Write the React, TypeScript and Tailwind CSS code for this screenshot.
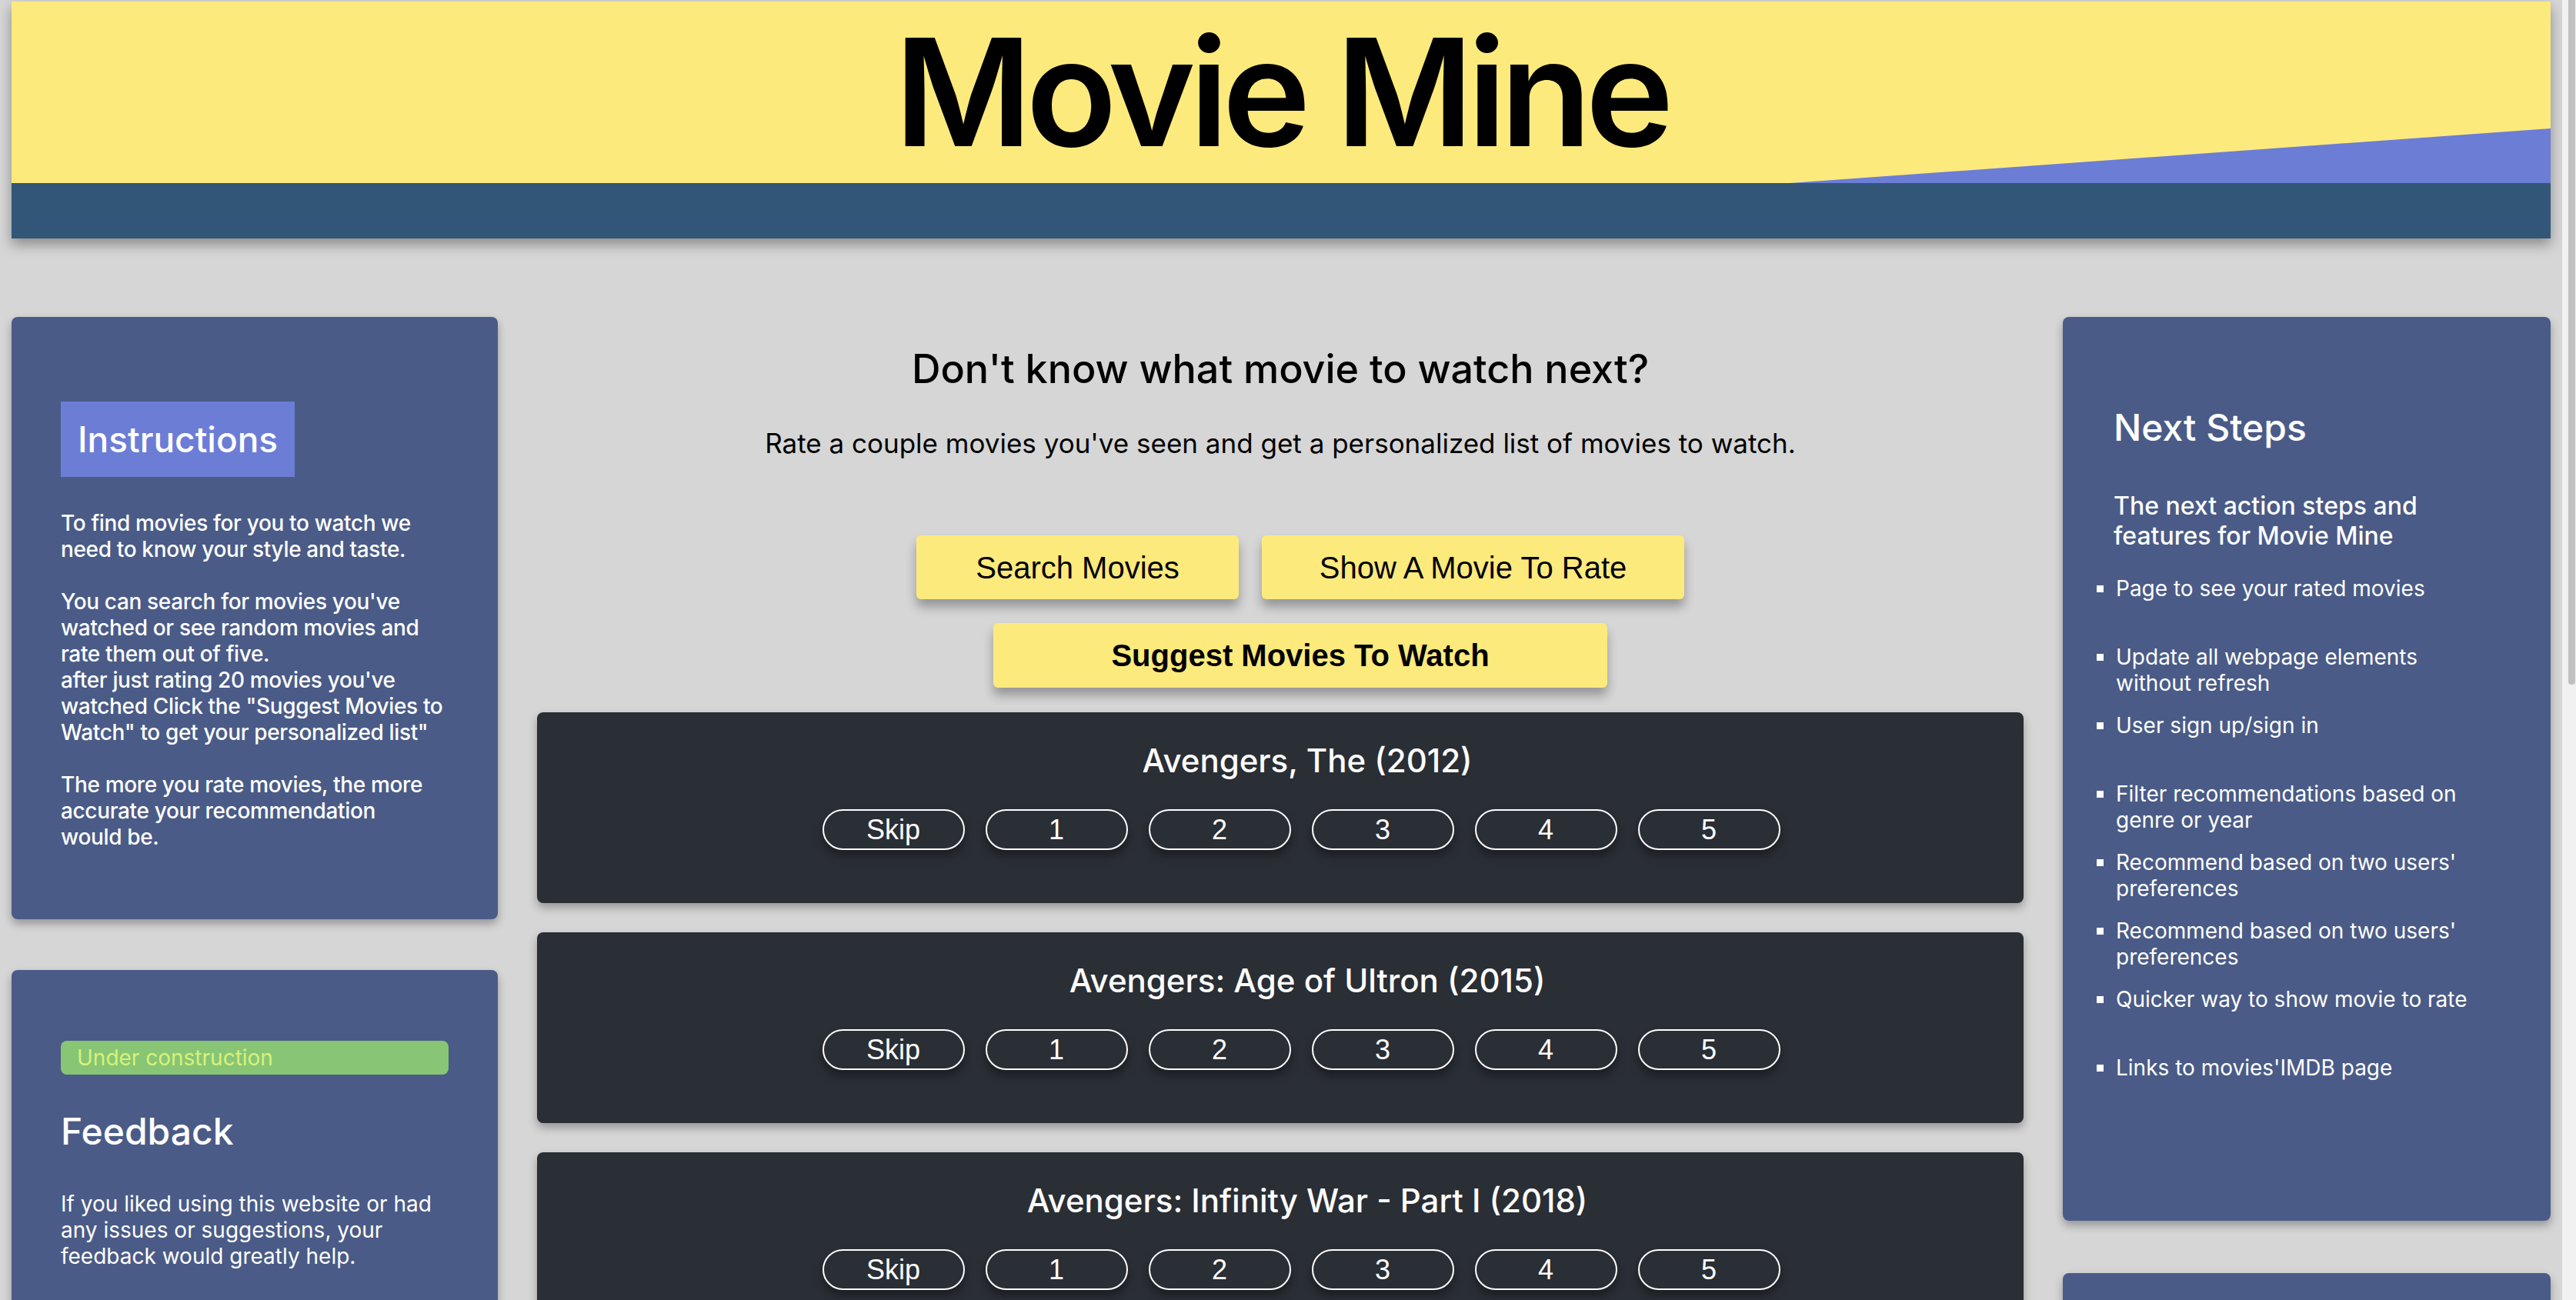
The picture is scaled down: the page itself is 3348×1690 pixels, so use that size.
import React from 'react';

const sans = { fontFamily: 'Inter, "Noto Sans", sans-serif' };
const arial = { fontFamily: '"Liberation Sans", Arial, sans-serif' };

const movies = [
  'Avengers, The (2012)',
  'Avengers: Age of Ultron (2015)',
  'Avengers: Infinity War - Part I (2018)',
];

const nextSteps = [
  'Page to see your rated movies',
  'Update all webpage elements without refresh',
  'User sign up/sign in',
  'Filter recommendations based on genre or year',
  "Recommend based on two users' preferences",
  "Recommend based on two users' preferences",
  'Quicker way to show movie to rate',
  "Links to movies'IMDB page",
];

function MovieCard({ title }: { title: string }) {
  return (
    <div className="h-[248px] shrink-0 rounded-lg bg-[#2a2e35] pl-[54px] pt-[38px] shadow-[0_6px_12px_rgba(0,0,0,0.3)]">
      <h3 className="pl-[16px] text-center text-[42px] leading-[50px] font-medium text-white" style={sans}>
        {title}
      </h3>
      <div className="mt-[38px] flex justify-center gap-[27px]">
        {['Skip', '1', '2', '3', '4', '5'].map((label) => (
          <button
            key={label}
            className="h-[53px] w-[185px] rounded-[27px] border-2 border-white bg-transparent text-[36px] leading-none text-white shadow-[0_8px_12px_rgba(0,0,0,0.35)]"
            style={arial}
          >
            {label}
          </button>
        ))}
      </div>
    </div>
  );
}

export default function App() {
  return (
    <div className="flex h-screen overflow-hidden bg-[#d6d6d6]" style={sans}>
      <div className="min-w-0 flex-1 px-[15px] pt-[2px]">
        {/* Header */}
        <header className="shadow-[0_8px_16px_rgba(0,0,0,0.35)]">
          <div className="relative flex h-[236px] items-center justify-center overflow-hidden bg-[#fdea7c]">
            <svg
              className="absolute bottom-0 right-0"
              width="989"
              height="71"
              viewBox="0 0 989 71"
              preserveAspectRatio="none"
            >
              <polygon points="0,71 989,0 989,71" fill="#6c7dd5" />
            </svg>
            <h1 className="relative text-[194px] leading-none font-semibold tracking-[-8px] text-black">Movie Mine</h1>
          </div>
          <div className="h-[72px] bg-[#325678]" />
        </header>

        <main className="mt-[102px] grid grid-cols-[632px_1fr_634px] gap-x-[51px]">
          {/* Left column */}
          <div className="flex flex-col gap-[66px]">
            <section className="rounded-lg bg-[#4a5b87] px-[64px] pt-[110px] pb-[90px] text-white shadow-[0_6px_12px_rgba(0,0,0,0.3)]">
              <div className="inline-block bg-[#6c7dd6] px-[22px] py-[20px] text-[46px] leading-[58px] font-medium">
                Instructions
              </div>
              <p className="mt-[43px] text-[28px] leading-[34px] font-medium tracking-[-0.35px]">
                To find movies for you to watch we need to know your style and taste.
                <br />
                <br />
                You can search for movies you've watched or see random movies and rate them out of five.
                <br />
                after just rating 20 movies you've watched Click the "Suggest Movies to Watch" to get your
                personalized list"
                <br />
                <br />
                The more you rate movies, the more accurate your recommendation
                <br />
                would be.
              </p>
            </section>

            <section className="h-[600px] rounded-lg bg-[#4a5b87] px-[64px] pt-[92px] text-white shadow-[0_6px_12px_rgba(0,0,0,0.3)]">
              <div className="flex h-[44px] items-center rounded-lg bg-[#88c574] px-[21px] text-[28px] text-[#d7f27a]">
                Under construction
              </div>
              <h2 className="mt-[45px] text-[48px] leading-[58px] font-medium">Feedback</h2>
              <p className="mt-[48px] text-[28px] leading-[34px]">
                If you liked using this website or had any issues or suggestions, your feedback would greatly help.
              </p>
            </section>
          </div>

          {/* Center column */}
          <div className="flex flex-col items-stretch pt-[37px]">
            <h2 className="text-center text-[52px] leading-[62px] font-medium text-black">
              Don't know what movie to watch next?
            </h2>
            <p className="mt-[45px] text-center text-[35px] leading-[40px] text-black">
              Rate a couple movies you've seen and get a personalized list of movies to watch.
            </p>
            <div className="mt-[100px] flex justify-center gap-[30px] pl-[52px]">
              <button
                className="h-[83px] w-[419px] rounded-md bg-[#fdea7c] text-[40px] text-black shadow-[0_10px_14px_rgba(0,0,0,0.3)]"
                style={arial}
              >
                Search Movies
              </button>
              <button
                className="h-[83px] w-[549px] rounded-md bg-[#fdea7c] text-[40px] text-black shadow-[0_10px_14px_rgba(0,0,0,0.3)]"
                style={arial}
              >
                Show A Movie To Rate
              </button>
            </div>
            <div className="mt-[31px] flex justify-center pl-[52px]">
              <button
                className="h-[84px] w-[798px] rounded-md bg-[#fdea7c] text-[40px] font-bold text-black shadow-[0_10px_14px_rgba(0,0,0,0.3)]"
                style={arial}
              >
                Suggest Movies To Watch
              </button>
            </div>
            <div className="mt-[32px] flex flex-col gap-[38px] pb-[40px]">
              {movies.map((m) => (
                <MovieCard key={m} title={m} />
              ))}
            </div>
          </div>

          {/* Right column */}
          <div className="flex flex-col gap-[68px]">
            <section className="rounded-lg bg-[#4a5b87] px-[66px] pt-[115px] pb-[127px] text-white shadow-[0_6px_12px_rgba(0,0,0,0.3)]">
              <h2 className="text-[48px] leading-[58px] font-medium">Next Steps</h2>
              <h4 className="mt-[53px] pr-[40px] text-[32px] leading-[39px] font-medium">
                The next action steps and features for Movie Mine
              </h4>
              <ul className="mt-[32px] list-[square] pl-[3px] text-[28px] leading-[34px]">
                {nextSteps.map((s, i) => (
                  <li key={i} className="h-[89px] pr-[30px]">
                    {s}
                  </li>
                ))}
              </ul>
            </section>
            <section className="h-[500px] rounded-lg bg-[#4a5b87] shadow-[0_6px_12px_rgba(0,0,0,0.3)]" />
          </div>
        </main>
      </div>

      {/* Scrollbar */}
      <div className="flex w-[18px] shrink-0 bg-[#f1f1f1] pl-[8px] pr-px">
        <div className="h-[890px] w-full rounded-b-sm bg-[#c1c1c1]" />
      </div>
    </div>
  );
}
